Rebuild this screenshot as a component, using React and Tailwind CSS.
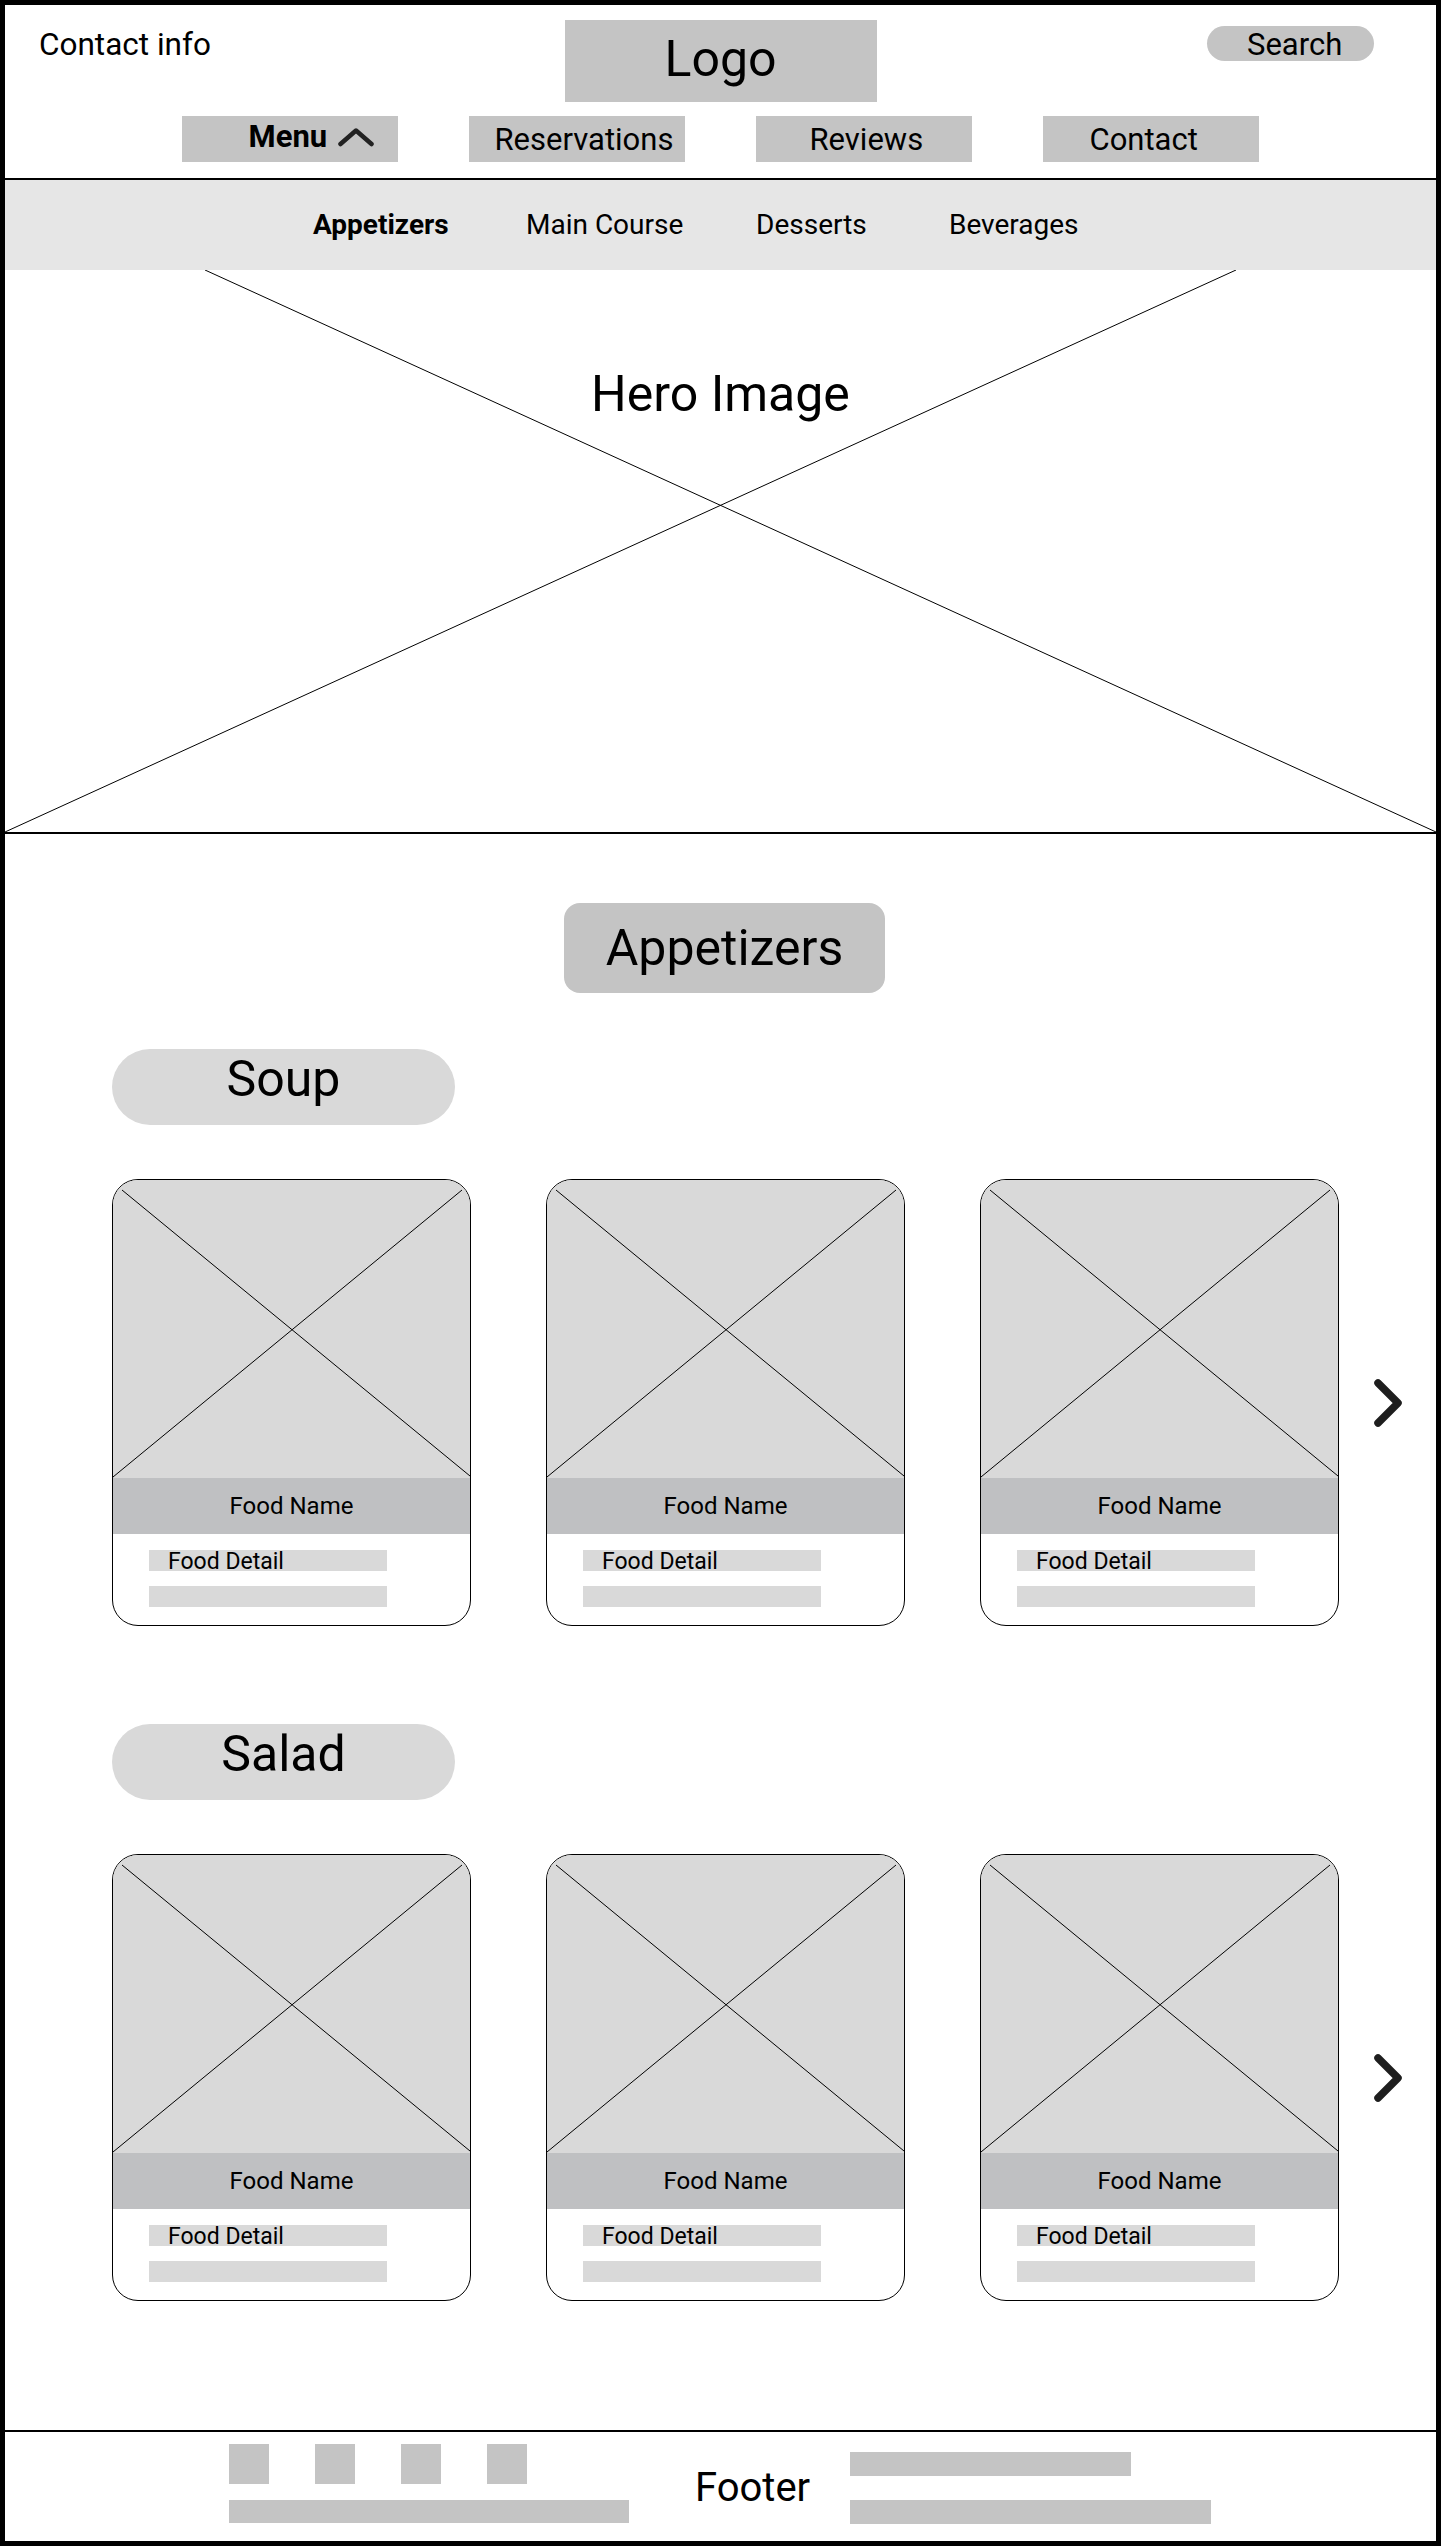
import React from "react";

function ImgX() {
  return (
    <svg className="absolute inset-0 w-full h-full" viewBox="0 0 357 298" preserveAspectRatio="none">
      <line x1="9" y1="10" x2="357" y2="296" stroke="#000" strokeWidth="1" />
      <line x1="349" y1="10" x2="0" y2="297" stroke="#000" strokeWidth="1" />
    </svg>
  );
}

function Card() {
  return (
    <div className="w-[359px] h-[447px] border border-black rounded-[26px] overflow-hidden flex flex-col bg-white shrink-0">
      <div className="relative h-[298px] bg-[#d9d9d9] shrink-0">
        <ImgX />
      </div>
      <div className="h-[56px] bg-[#bfc0c2] flex items-center justify-center text-[24px] leading-none shrink-0">
        Food Name
      </div>
      <div className="flex flex-col pl-[36px] pt-[16px] gap-[15px]">
        <div className="w-[238px] h-[21px] bg-[#d9d9d9] pl-[19px] text-[23px] leading-none whitespace-nowrap">
          Food Detail
        </div>
        <div className="w-[238px] h-[21px] bg-[#d9d9d9]" />
      </div>
    </div>
  );
}

function Chevron() {
  return (
    <svg width="30" height="50" viewBox="0 0 30 50" className="ml-[34px] shrink-0">
      <path d="M5 5 L25 25 L5 45" fill="none" stroke="#1e1e1e" strokeWidth="7.5" strokeLinecap="round" strokeLinejoin="round" />
    </svg>
  );
}

function CardRow() {
  return (
    <div className="flex items-center pl-[107px]">
      <div className="flex gap-[75px]">
        <Card />
        <Card />
        <Card />
      </div>
      <Chevron />
    </div>
  );
}

function SubPill({ label, className }) {
  return (
    <div className={"ml-[107px] w-[343px] h-[76px] rounded-full bg-[#d9d9d9] flex justify-center pt-[5px] text-[50px] leading-none " + className}>
      {label}
    </div>
  );
}

export default function App() {
  return (
    <div className="w-[1441px] h-[2546px] border-[5px] border-black bg-white flex flex-col text-black font-['Roboto','Liberation_Sans',sans-serif]">
      {/* Header */}
      <header className="h-[175px] border-b-2 border-black flex flex-col shrink-0">
        <div className="mt-[15px] grid grid-cols-[1fr_auto_1fr] h-[82px]">
          <div className="justify-self-start ml-[34px] mt-[9px] text-[31.5px] leading-none whitespace-nowrap">Contact info</div>
          <div className="w-[312px] h-[82px] bg-[#c4c4c4] flex justify-center pt-[14px] text-[50px] leading-none">Logo</div>
          <div className="justify-self-end mr-[62px] mt-[6px] w-[167px] h-[35px] rounded-full bg-[#c4c4c4] flex items-center pl-[40px] pt-[2px] text-[31px] leading-none">
            Search
          </div>
        </div>
        <nav className="mt-[14px] flex justify-center gap-[71px] pr-[1px]">
          <div className="w-[216px] h-[46px] bg-[#c4c4c4] flex items-center pl-[67px] pb-[5px] gap-[10px]">
            <span className="text-[31px] leading-none font-bold">Menu</span>
            <svg width="38" height="20" viewBox="0 0 38 20">
              <path d="M3.5 17 L19 3.5 L34.5 17" fill="none" stroke="#222" strokeWidth="4.5" strokeLinecap="round" strokeLinejoin="round" />
            </svg>
          </div>
          <div className="w-[216px] h-[46px] bg-[#c4c4c4] flex items-center pl-[26px] text-[31px] leading-none whitespace-nowrap">Reservations</div>
          <div className="w-[216px] h-[46px] bg-[#c4c4c4] flex items-center pl-[54px] text-[31px] leading-none">Reviews</div>
          <div className="w-[216px] h-[46px] bg-[#c4c4c4] flex items-center pl-[47px] text-[31px] leading-none">Contact</div>
        </nav>
      </header>

      {/* Category band */}
      <div className="h-[90px] bg-[#e6e6e6] flex items-center pl-[308px] text-[28px] leading-none shrink-0">
        <div className="w-[213px] font-bold">Appetizers</div>
        <div className="w-[230px]">Main Course</div>
        <div className="w-[193px]">Desserts</div>
        <div>Beverages</div>
      </div>

      {/* Hero */}
      <div className="relative h-[564px] border-b-2 border-black shrink-0 flex justify-center">
        <svg className="absolute inset-0 w-full h-full" viewBox="0 0 1431 562" preserveAspectRatio="none">
          <line x1="200" y1="0" x2="1431" y2="562" stroke="#000" strokeWidth="1" vectorEffect="non-scaling-stroke" />
          <line x1="1231" y1="0" x2="0" y2="562" stroke="#000" strokeWidth="1" vectorEffect="non-scaling-stroke" />
        </svg>
        <div className="relative pt-[99px] text-[50px] leading-none whitespace-nowrap">Hero Image</div>
      </div>

      {/* Main */}
      <main className="flex-1 flex flex-col">
        <div className="mt-[69px] flex justify-center pl-[8px]">
          <div className="w-[321px] h-[90px] rounded-[16px] bg-[#c4c4c4] flex items-center justify-center text-[50px] leading-none">
            Appetizers
          </div>
        </div>
        <SubPill label="Soup" className="mt-[56px]" />
        <div className="mt-[54px]">
          <CardRow />
        </div>
        <SubPill label="Salad" className="mt-[98px]" />
        <div className="mt-[54px]">
          <CardRow />
        </div>
      </main>

      {/* Footer */}
      <footer className="h-[111px] border-t-2 border-black flex items-start pl-[224px] shrink-0">
        <div className="mt-[12px] w-[400px] flex flex-col">
          <div className="flex gap-[46px]">
            <div className="w-[40px] h-[40px] bg-[#c4c4c4]" />
            <div className="w-[40px] h-[40px] bg-[#c4c4c4]" />
            <div className="w-[40px] h-[40px] bg-[#c4c4c4]" />
            <div className="w-[40px] h-[40px] bg-[#c4c4c4]" />
          </div>
          <div className="mt-[16px] w-[400px] h-[23px] bg-[#c4c4c4]" />
        </div>
        <div className="ml-[66px] w-[155px] mt-[36px] text-[40px] leading-none">Footer</div>
        <div className="mt-[20px] flex flex-col gap-[24px]">
          <div className="w-[281px] h-[24px] bg-[#c4c4c4]" />
          <div className="w-[361px] h-[24px] bg-[#c4c4c4]" />
        </div>
      </footer>
    </div>
  );
}
